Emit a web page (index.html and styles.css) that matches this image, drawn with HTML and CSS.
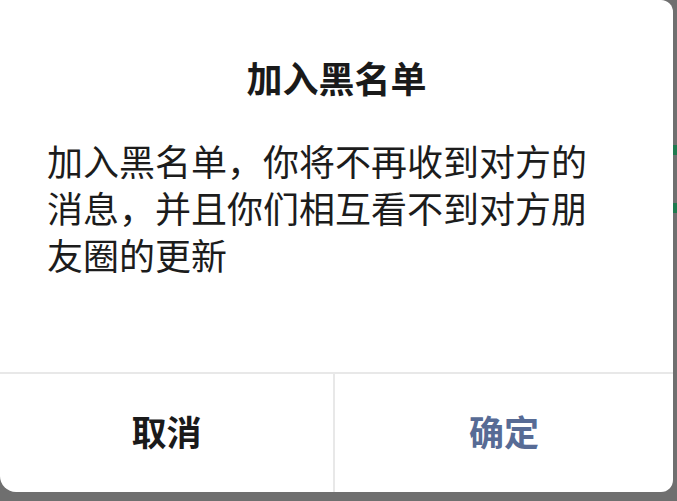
FILE: index.html
```html
<!DOCTYPE html>
<html lang="zh">
<head>
<meta charset="utf-8">
<link rel="stylesheet" href="styles.css">
</head>
<body>
<div class="screen">
  <span class="peek peek-a"></span>
  <span class="peek peek-b"></span>
  <div class="dialog">
    <div class="title">加入黑名单</div>
    <div class="message">加入黑名单，你将不再收到对方的消息，并且你们相互看不到对方朋友圈的更新</div>
    <div class="actions">
      <div class="btn btn-cancel">取消</div>
      <div class="btn btn-ok">确定</div>
    </div>
  </div>
</div>
</body>
</html>
```
FILE: styles.css
```css
html, body {
  margin: 0;
  padding: 0;
  background: #6f6f6f;
}
.screen {
  position: relative;
  width: 677px;
  height: 501px;
  overflow: hidden;
  background: #6f6f6f;
  font-family: "Noto Sans CJK SC", "Noto Sans", sans-serif;
}
.peek {
  position: absolute;
  right: 0;
  width: 5px;
  height: 10px;
  background: #1e7a4e;
}
.peek-a { top: 145px; }
.peek-b { top: 203px; }
.dialog {
  position: relative;
  width: 673px;
  height: 492px;
  background: #ffffff;
  border-radius: 0 12px 12px 16px;
  display: flex;
  flex-direction: column;
}
.title {
  margin-top: 52px;
  height: 50px;
  line-height: 50px;
  text-align: center;
  font-size: 36px;
  font-weight: 700;
  color: #1a1a1a;
}
.message {
  margin-top: 35px;
  padding: 0 70px 0 47px;
  font-size: 36px;
  line-height: 47px;
  color: #1c1c1c;
}
.actions {
  margin-top: auto;
  height: 118px;
  border-top: 2px solid #e8e8e8;
  display: flex;
}
.btn {
  display: flex;
  align-items: center;
  justify-content: center;
  padding-bottom: 6px;
  font-size: 35px;
  font-weight: 700;
}
.btn-cancel {
  flex: 0 0 333px;
  color: #1a1a1a;
  border-right: 2px solid #e8e8e8;
}
.btn-ok {
  flex: 1;
  color: #576b95;
}
```
